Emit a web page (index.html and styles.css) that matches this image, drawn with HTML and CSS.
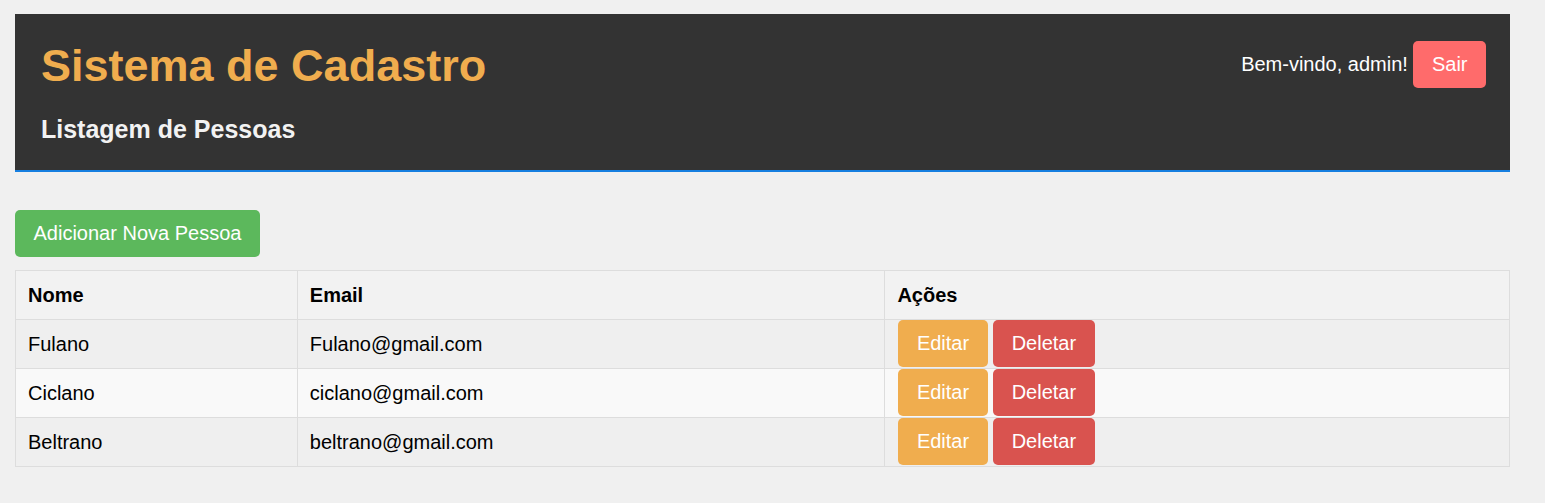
FILE: index.html
```html
<!DOCTYPE html>
<html lang="pt-BR">
<head>
<meta charset="utf-8">
<title>Sistema de Cadastro</title>
<link rel="stylesheet" href="styles.css">
</head>
<body>
<div class="page">
  <header class="header">
    <div class="header-top">
      <h1 class="title">Sistema de Cadastro</h1>
      <div class="user">Bem-vindo, admin! <button class="btn btn-logout">Sair</button></div>
    </div>
    <h2 class="subtitle">Listagem de Pessoas</h2>
  </header>

  <main class="content">
    <button class="btn btn-add">Adicionar Nova Pessoa</button>
    <table class="people">
      <colgroup>
        <col class="col-name">
        <col class="col-email">
        <col class="col-actions">
      </colgroup>
      <thead>
        <tr><th>Nome</th><th>Email</th><th>Ações</th></tr>
      </thead>
      <tbody>
        <tr>
          <td>Fulano</td><td>Fulano@gmail.com</td>
          <td class="actions"><div class="action-group"><button class="btn btn-edit">Editar</button><button class="btn btn-delete">Deletar</button></div></td>
        </tr>
        <tr>
          <td>Ciclano</td><td>ciclano@gmail.com</td>
          <td class="actions"><div class="action-group"><button class="btn btn-edit">Editar</button><button class="btn btn-delete">Deletar</button></div></td>
        </tr>
        <tr>
          <td>Beltrano</td><td>beltrano@gmail.com</td>
          <td class="actions"><div class="action-group"><button class="btn btn-edit">Editar</button><button class="btn btn-delete">Deletar</button></div></td>
        </tr>
      </tbody>
    </table>
  </main>
</div>
</body>
</html>
```

FILE: styles.css
```css
* { box-sizing: border-box; }

body {
  margin: 0;
  background: #f0f0f0;
  font-family: "Liberation Sans", Arial, sans-serif;
  font-size: 20px;
  color: #000;
}

.page {
  width: 1495px;
  margin: 14px 0 0 15px;
}

.header {
  background: #333333;
  border-bottom: 2px solid #167fe0;
  padding: 26px 24px 26px 26px;
}

.header-top {
  display: flex;
  align-items: flex-start;
  justify-content: space-between;
}

.title {
  margin: 0;
  font-size: 45px;
  line-height: 52px;
  font-weight: bold;
  color: #f0ad4e;
}

.user {
  color: #ffffff;
  font-size: 20px;
  line-height: 23px;
  margin-top: 1px;
}

.subtitle {
  margin: 23px 0 0 0;
  font-size: 25px;
  font-weight: bold;
  color: #f2f2f2;
  line-height: 29px;
}

.btn {
  font-family: "Liberation Sans", Arial, sans-serif;
  font-size: 20px;
  line-height: 23px;
  color: #ffffff;
  border: none;
  border-radius: 5px;
  padding: 12px 18.5px;
  cursor: pointer;
}

.btn-logout { background: #ff6b6b; }
.btn-add { background: #5cb85c; }
.btn-edit { background: #f0ad4e; }
.btn-delete { background: #d9534f; padding: 12px 19px; }

.content {
  padding-top: 38px;
}

.people {
  width: 100%;
  margin-top: 13px;
  border-collapse: collapse;
}

.col-name { width: 282px; }
.col-email { width: 588px; }
.col-actions { width: 625px; }

.people th,
.people td {
  border: 1px solid #dddddd;
  padding: 12px 12px;
  text-align: left;
  font-size: 20px;
  line-height: 24px;
  vertical-align: middle;
}

.people th {
  font-weight: bold;
  background: #f2f2f2;
}

.people tbody tr:nth-child(odd) { background: #efefef; }
.people tbody tr:nth-child(even) { background: #f9f9f9; }

.people td.actions {
  padding: 0 12px 0 13px;
  vertical-align: top;
}

.action-group {
  display: flex;
  gap: 5px;
}
```
